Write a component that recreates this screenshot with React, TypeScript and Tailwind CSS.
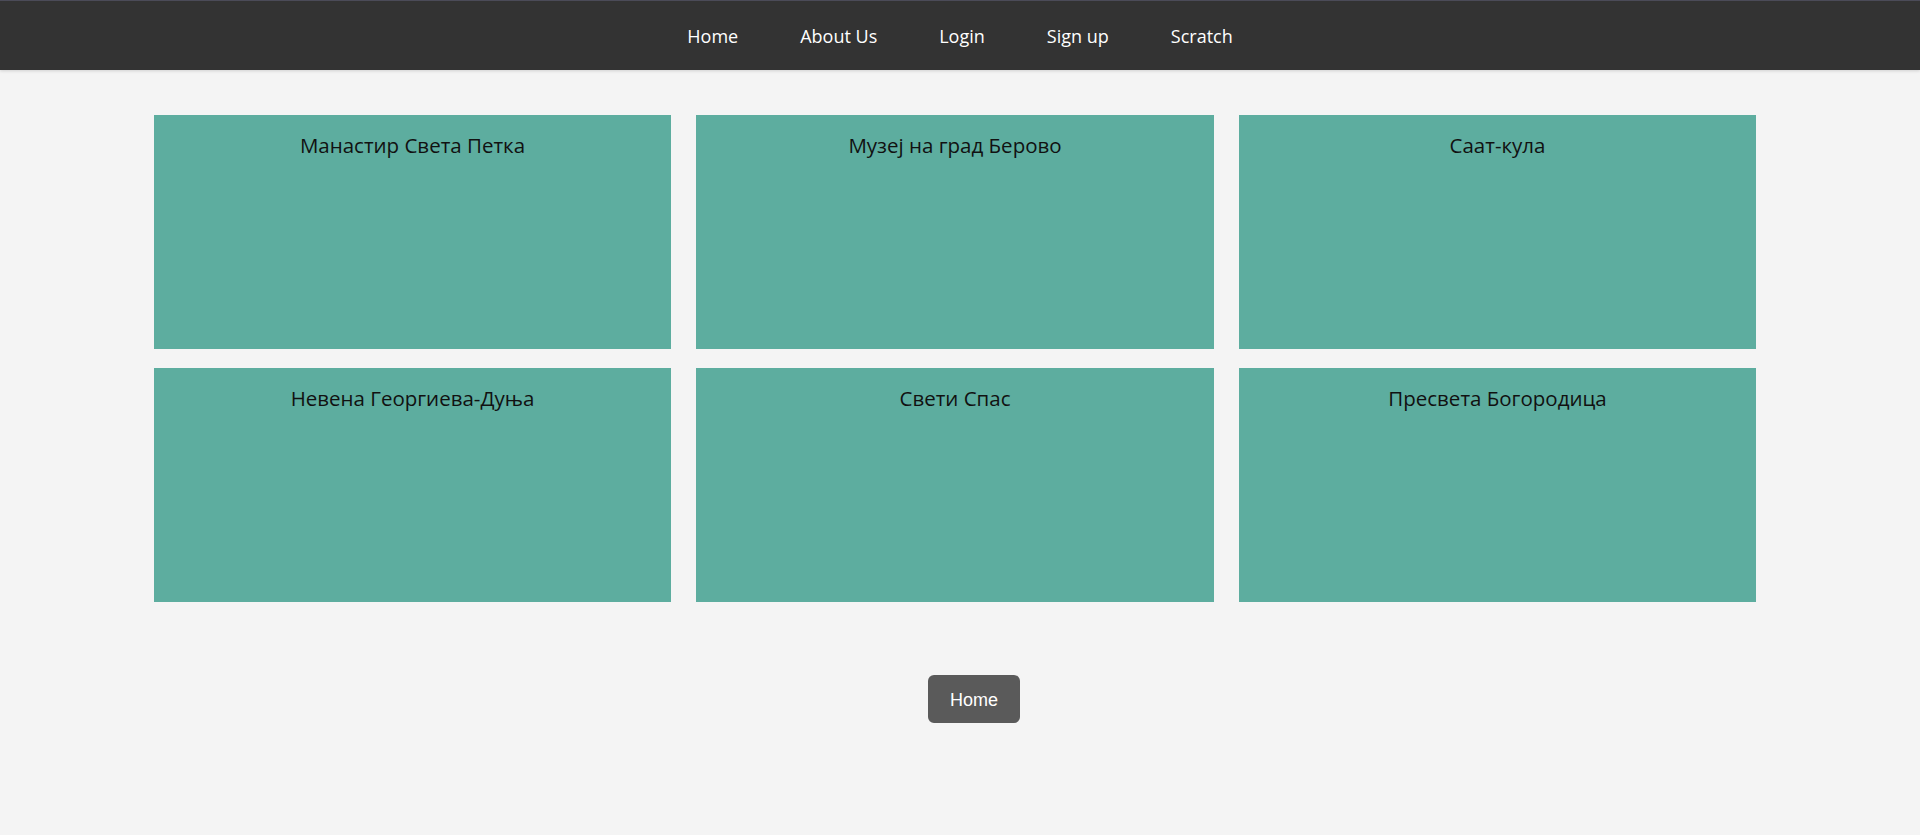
const places = [
    "Манастир Света Петка",
    "Музеј на град Берово",
    "Саат-кула",
    "Невена Георгиева-Дуња",
    "Свети Спас",
    "Пресвета Богородица",
];

const links = ["Home", "About Us", "Login", "Sign up", "Scratch"];

export default function App() {
    return (
        <div className="min-h-[835px] bg-[#f4f4f4]">
            {/* Navbar */}
            <nav className="h-[70px] bg-[#333333] border-t border-[#4b4b58] pt-[2px] flex items-center justify-center shadow-[0_1px_3px_rgba(0,0,0,0.15)]">
                {links.map((l) => (
                    <a
                        key={l}
                        href="#"
                        className="px-[31px] text-[18px] text-white font-['Open_Sans',sans-serif]"
                    >
                        {l}
                    </a>
                ))}
            </nav>

            {/* Places */}
            <div className="pt-[45px] pl-[154px] grid grid-cols-[517px_518px_517px] gap-x-[25px] gap-y-[19px]">
                {places.map((p) => (
                    <div key={p} className="h-[234px] bg-[#5dad9f] pt-[15px] text-center">
                        <h3 className="text-[20.5px] text-[#111] font-['Open_Sans',sans-serif]">{p}</h3>
                    </div>
                ))}
            </div>

            <div className="mt-[73px] pl-[928px]">
                <button className="w-[92px] h-[48px] pt-[2px] rounded-md bg-[#5a5a5a] text-white text-[18px] font-['Liberation_Sans',Arial,sans-serif]">
                    Home
                </button>
            </div>
        </div>
    );
}
